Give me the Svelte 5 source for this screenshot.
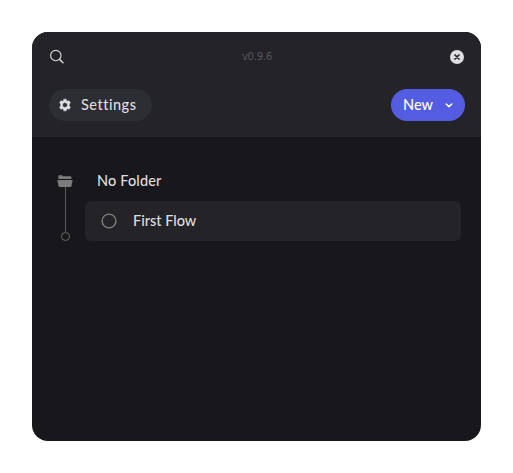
<script>
  const groups = [{ name: 'No Folder', flows: ['First Flow'] }];
</script>

<main class="stage">
  <section class="window">
    <header>
      <div class="titlebar">
        <svg class="search" width="16" height="16" viewBox="0 0 16 16" fill="none" stroke="#d6d6d8">
          <circle cx="6.8" cy="6.5" r="5.2" stroke-width="1.15" />
          <path d="M10.6 10.4 14 13.8" stroke-width="1.5" stroke-linecap="round" />
        </svg>
        <span class="version">v0.9.6</span>
        <svg class="close" width="14" height="14" viewBox="0 0 14 14">
          <circle cx="7" cy="7" r="7" fill="#dededf" />
          <path d="m5 5 4 4m0-4L5 9" stroke="#242328" stroke-width="1.7" stroke-linecap="round" />
        </svg>
      </div>
      <div class="toolbar">
        <button class="settings">
          <svg width="14" height="14" viewBox="0 0 14 14">
            <path
              fill="#dededf"
              stroke="#dededf"
              stroke-width=".6"
              stroke-linejoin="round"
              fill-rule="evenodd"
              d="M5.8 1.2h2.4l.4 1.6.9.5 1.6-.5 1.3 2.1L11.2 6v2l1.2 1.1-1.3 2.1-1.6-.5-.9.5-.4 1.6H5.8l-.4-1.6-.9-.5-1.6.5-1.3-2.1L2.8 8V6L1.6 4.9l1.3-2.1 1.6.5.9-.5zM7 4.5a2.5 2.5 0 1 0 0 5 2.5 2.5 0 0 0 0-5z"
            />
          </svg>
          <span class="settings-label">Settings</span>
        </button>
        <button class="new">
          <span class="new-label">New</span>
          <svg width="8" height="6" viewBox="0 0 8 6" fill="none" stroke="#fff">
            <path d="m1.2 2 2.8 2.6L6.8 2" stroke-width="1.5" stroke-linecap="round" stroke-linejoin="round" />
          </svg>
        </button>
      </div>
    </header>

    {#each groups as group}
      <div class="group">
        <div class="rail">
          <svg width="16" height="12" viewBox="0 0 16 12" fill="#7b7b7d">
            <path d="M1.4 4V.8q0-.6.6-.6h3.2l1 1h7.5q.7 0 .7.7V4z" />
            <path d="M1 4.9h14q.7 0 .6.7l-1.1 5.5q-.2.8-.9.8H2.4q-.7 0-.9-.8L.4 5.6Q.3 4.9 1 4.9z" />
            <path d="M.3 4.5h15.4" stroke="#18171b" stroke-width=".8" />
          </svg>
          <div class="line"></div>
          <div class="end"></div>
        </div>
        <div class="content">
          <div class="name">{group.name}</div>
          {#each group.flows as flow}
            <div class="flow">
              <svg width="16" height="16" viewBox="0 0 16 16" fill="none" stroke="#818183">
                <circle cx="8" cy="8" r="6.9" stroke-width="1.4" />
              </svg>
              <span class="flow-label">{flow}</span>
            </div>
          {/each}
        </div>
      </div>
    {/each}
  </section>
</main>

<style>
  :global(body) {
    background: #fff;
  }
  .stage {
    box-sizing: border-box;
    height: 473px;
    padding: 32px;
    font-family: Lato, 'Liberation Sans', sans-serif;
    font-size: 14.5px;
    font-weight: 500;
    line-height: 20px;
    color: #dededf;
  }
  .window {
    height: 409px;
    background: #18171b;
    border-radius: 16px;
    overflow: hidden;
  }
  header {
    box-sizing: border-box;
    height: 105px;
    padding: 15px 16px 16px 17px;
    background: #242328;
  }
  .titlebar {
    display: flex;
    align-items: center;
    justify-content: space-between;
    height: 20px;
    padding-right: 1px;
  }
  .version {
    font: 10px/14px 'DejaVu Sans', sans-serif;
    letter-spacing: -0.2px;
    color: #57565b;
    padding-right: 1px;
  }
  .toolbar {
    display: flex;
    justify-content: space-between;
    margin-top: 22px;
  }
  button {
    box-sizing: border-box;
    display: flex;
    align-items: center;
    height: 32px;
    border: 0;
    border-radius: 16px;
    font: inherit;
    color: inherit;
  }
  .settings {
    width: 103px;
    padding: 0 0 0 9px;
    gap: 9px;
    background: #2d2d34;
  }
  .new {
    width: 74px;
    padding: 0 0 0 12px;
    gap: 12px;
    color: #fff;
    background: #545de2;
  }
  .new-label {
    width: 30px;
    text-align: left;
  }
  .group {
    display: flex;
    padding: 34px 20px 0 25px;
  }
  .rail {
    display: flex;
    flex-direction: column;
    align-items: center;
    width: 16px;
    padding-top: 4px;
  }
  .line {
    width: 1px;
    height: 45px;
    margin-left: 1px;
    background: #5b5b5d;
  }
  .end {
    box-sizing: border-box;
    width: 9px;
    height: 9px;
    margin-left: 1px;
    border: 1px solid #68686a;
    border-radius: 50%;
  }
  .content {
    flex: 1;
    margin-left: 12px;
  }
  .name {
    height: 30px;
    padding-left: 12px;
  }
  .flow {
    box-sizing: border-box;
    display: flex;
    align-items: center;
    gap: 16px;
    height: 40px;
    padding-left: 16px;
    background: #242328;
    border-radius: 6px;
  }
  .settings-label {
    letter-spacing: 0.5px;
  }
  .name {
    letter-spacing: 0.15px;
  }
</style>
